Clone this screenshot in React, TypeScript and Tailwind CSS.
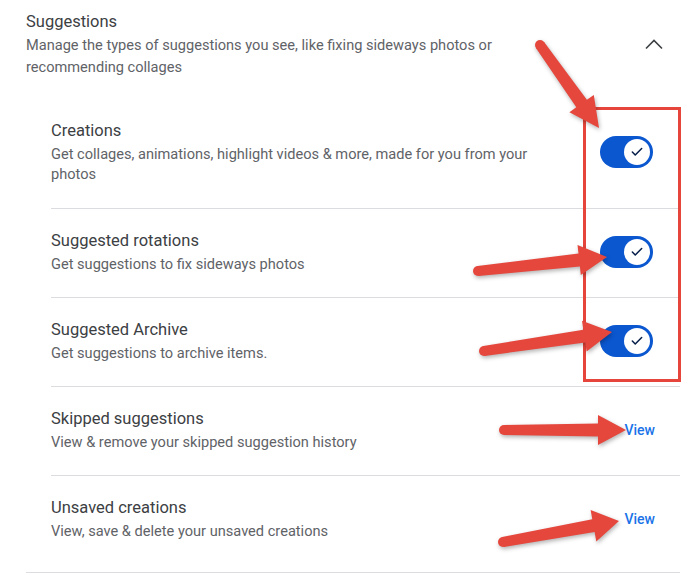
import { Check } from "lucide-react";

type Item = { title: string; desc: string; action: "toggle" | "view" };

const items: Item[] = [
  {
    title: "Creations",
    desc: "Get collages, animations, highlight videos & more, made for you from your photos",
    action: "toggle",
  },
  { title: "Suggested rotations", desc: "Get suggestions to fix sideways photos", action: "toggle" },
  { title: "Suggested Archive", desc: "Get suggestions to archive items.", action: "toggle" },
  { title: "Skipped suggestions", desc: "View & remove your skipped suggestion history", action: "view" },
  { title: "Unsaved creations", desc: "View, save & delete your unsaved creations", action: "view" },
];

// annotation arrows: start, tip, head length, head width, shaft width at start / at head
const arrows = [
  { s: [540, 45], t: [599, 128], hl: 30, hw: 30, w0: 10, w1: 13 },
  { s: [478, 271], t: [607, 257], hl: 28, hw: 30, w0: 10, w1: 13 },
  { s: [484, 351], t: [612, 332], hl: 28, hw: 31, w0: 10, w1: 13 },
  { s: [504, 430], t: [626, 430], hl: 28, hw: 30, w0: 10, w1: 13 },
  { s: [503, 542], t: [619, 521], hl: 26, hw: 32, w0: 10, w1: 13 },
];

function arrowPoints(a: (typeof arrows)[number]) {
  const [sx, sy] = a.s;
  const [tx, ty] = a.t;
  const len = Math.hypot(tx - sx, ty - sy);
  const ux = (tx - sx) / len;
  const uy = (ty - sy) / len;
  const nx = -uy;
  const ny = ux;
  const bx = tx - ux * a.hl;
  const by = ty - uy * a.hl;
  const p = (x: number, y: number) => `${x.toFixed(1)},${y.toFixed(1)}`;
  return [
    p(sx + (nx * a.w0) / 2, sy + (ny * a.w0) / 2),
    p(bx + (nx * a.w1) / 2, by + (ny * a.w1) / 2),
    p(bx + (nx * a.hw) / 2, by + (ny * a.hw) / 2),
    p(tx, ty),
    p(bx - (nx * a.hw) / 2, by - (ny * a.hw) / 2),
    p(bx - (nx * a.w1) / 2, by - (ny * a.w1) / 2),
    p(sx - (nx * a.w0) / 2, sy - (ny * a.w0) / 2),
  ].join(" ");
}

function Toggle() {
  return (
    <div className="relative h-8 w-[53px] shrink-0 rounded-full bg-[#0b57d0]">
      <div className="absolute top-[3px] right-[3px] flex h-[26px] w-[26px] items-center justify-center rounded-full bg-white">
        <Check className="h-[14px] w-[14px] text-[#041e49]" strokeWidth={2.6} />
      </div>
    </div>
  );
}

export default function App() {
  return (
    <div className="relative h-[575px] w-[700px] overflow-hidden bg-white font-[Roboto,sans-serif]">
      <section className="ml-[26px] mr-5 border-b border-[#dadce0] pb-2">
        <div className="flex items-center justify-between pt-[10px] pr-[14px]">
          <div className="w-[520px]">
            <h2 className="text-[16.5px] leading-6 text-[#3c4043]">Suggestions</h2>
            <p className="text-[14.6px] leading-[22px] text-[#5f6368]">
              Manage the types of suggestions you see, like fixing sideways photos or recommending collages
            </p>
          </div>
          <div className="flex h-6 w-6 items-center justify-center">
            <svg width="18" height="11" viewBox="0 0 18 11" fill="none">
              <polyline points="1,9.5 9,1.5 17,9.5" stroke="#3c4043" strokeWidth="1.6" />
            </svg>
          </div>
        </div>

        <div className="mt-[21px] ml-[25px] divide-y divide-[#dadce0]">
          {items.map((it, i) => (
            <div
              key={it.title}
              className={`flex items-center justify-between pt-5 ${i === 0 ? "pb-6" : "pb-[23px]"} ${
                it.action === "toggle" ? "pr-[27px]" : "pr-[25px]"
              }`}
            >
              <div className="w-[500px]">
                <h3 className="text-[16.5px] leading-6 text-[#3c4043]">{it.title}</h3>
                <p className="mt-px text-[14.6px] leading-5 text-[#5f6368]">{it.desc}</p>
              </div>
              {it.action === "toggle" ? (
                <Toggle />
              ) : (
                <a href="#" className="text-sm leading-5 font-medium text-[#1a73e8]">
                  View
                </a>
              )}
            </div>
          ))}
        </div>
      </section>

      <div className="pointer-events-none absolute top-[107px] left-[583px] h-[275px] w-[98px] border-[3px] border-[#e5453b]" />

      <svg
        className="pointer-events-none absolute inset-0 drop-shadow-[1px_2px_2px_rgba(0,0,0,0.3)]"
        width="700"
        height="575"
        viewBox="0 0 700 575"
      >
        {arrows.map((a, i) => (
          <g key={i} fill="#e5473d">
            <polygon points={arrowPoints(a)} />
            <circle cx={a.s[0]} cy={a.s[1]} r={a.w0 / 2} />
          </g>
        ))}
      </svg>
    </div>
  );
}
